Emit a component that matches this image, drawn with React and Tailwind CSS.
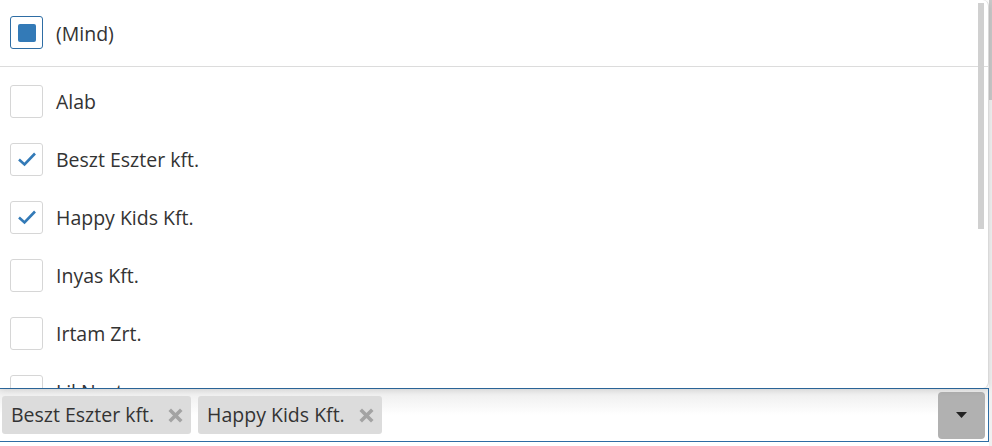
import React from "react";

const items = [
  { label: "Alab", checked: false },
  { label: "Beszt Eszter kft.", checked: true },
  { label: "Happy Kids Kft.", checked: true },
  { label: "Inyas Kft.", checked: false },
  { label: "Irtam Zrt.", checked: false },
  { label: "Lil Nest", checked: false },
];

const tags = ["Beszt Eszter kft.", "Happy Kids Kft."];

function Box({ state }) {
  return (
    <div
      className={`w-[33px] h-[33px] shrink-0 rounded-[3px] border bg-white flex items-center justify-center ${
        state === "all" ? "border-[#2e6da4]" : "border-[#d6d6d6]"
      }`}
    >
      {state === "all" && <div className="w-[18px] h-[18px] rounded-[2px] bg-[#337ab7]" />}
      {state === "checked" && (
        <svg width="20" height="16" viewBox="0 0 20 16" fill="none">
          <path d="M2 8.5 L7.5 13.5 L18 2.5" stroke="#337ab7" strokeWidth="2.6" />
        </svg>
      )}
    </div>
  );
}

export default function App() {
  return (
    <div className="w-[992px] h-[446px] bg-white flex font-['Open_Sans',sans-serif] text-[#333]">
      <div className="w-[989px] flex flex-col">
        {/* Dropdown list */}
        <div className="relative h-[388px] overflow-hidden bg-white border-r border-[#d9d9d9] rounded-r-[6px] shadow-[0_2px_6px_rgba(0,0,0,0.12)]">
          <div className="flex items-center gap-[13px] pl-[10px] pt-[16px] pb-[17px] border-b border-[#dcdcdc]">
            <Box state="all" />
            <span className="text-[19.5px] leading-[26px] pt-[2px]">(Mind)</span>
          </div>
          <div className="pt-[5px]">
            {items.map((it) => (
              <div key={it.label} className="h-[58px] flex items-center gap-[13px] pl-[10px]">
                <Box state={it.checked ? "checked" : "none"} />
                <span className="text-[19.5px] leading-[26px] pt-[2px]">{it.label}</span>
              </div>
            ))}
          </div>
          {/* scrollbar */}
          <div className="absolute right-[4px] top-[3px] w-[6px] h-[226px] bg-[#d0d0d0]" />
        </div>

        {/* Multiselect input */}
        <div className="h-[54px] border-y border-r border-[#2e6da4] flex items-center px-[2px] gap-[7px] bg-gradient-to-b from-[#ececec] via-white to-white">
          {tags.map((t) => (
            <div
              key={t}
              className="h-[38px] rounded-[3px] bg-[#dcdcdc] flex items-center pl-[9px] pr-[8px] gap-[14px] text-[19.5px]"
            >
              <span>{t}</span>
              <svg width="15" height="15" viewBox="0 0 15 15">
                <path d="M3 3 L12 12 M12 3 L3 12" stroke="#a3a3a3" strokeWidth="3.6" strokeLinecap="square" />
              </svg>
            </div>
          ))}
          <div className="ml-auto mr-[1px] w-[47px] h-[47px] rounded-[4px] bg-[#b1b1b1] flex items-center justify-center">
            <svg width="11" height="6" viewBox="0 0 11 6">
              <path d="M0 0 H11 L5.5 6 Z" fill="#222" />
            </svg>
          </div>
        </div>
      </div>
      <div className="flex-1 bg-[#f0f0f0] flex flex-col">
        <div className="h-[100px] bg-[#c8c8c8]" />
      </div>
    </div>
  );
}
